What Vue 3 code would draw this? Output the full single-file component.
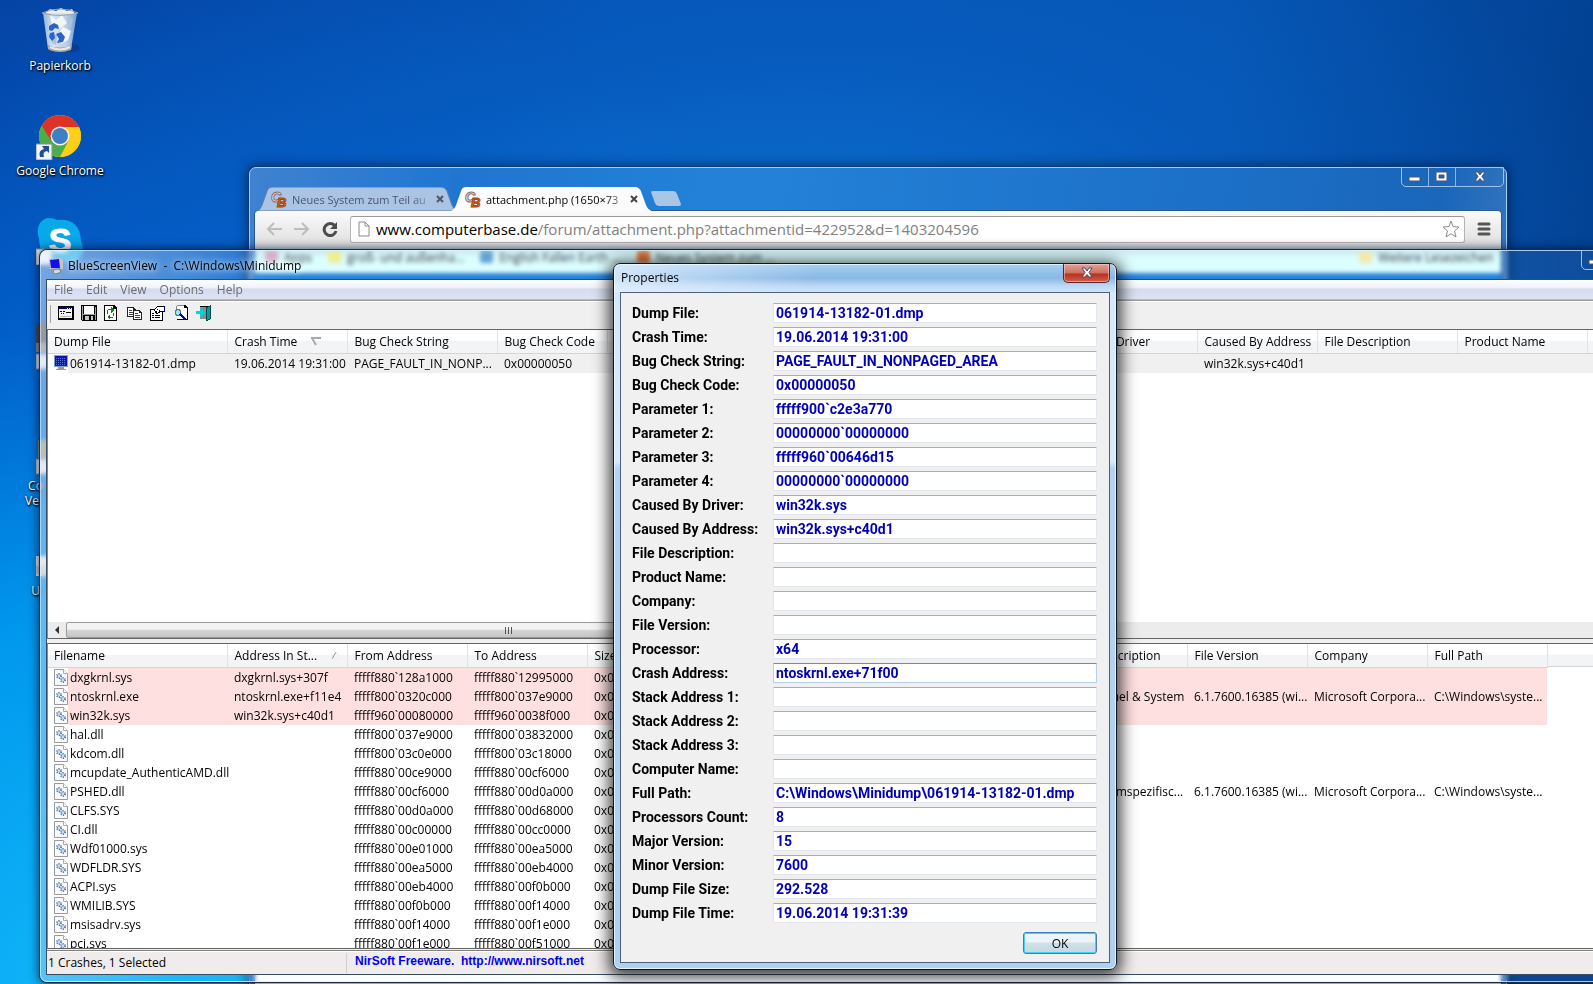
<script setup>
const menus = ['File', 'Edit', 'View', 'Options', 'Help']

const crashColumns = [
  { label: 'Dump File', width: 179 },
  { label: 'Crash Time', width: 120, sort: 'down' },
  { label: 'Bug Check String', width: 150 },
  { label: 'Bug Check Code', width: 110 },
  { label: 'Parameter 1', width: 110 },
  { label: 'Parameter 2', width: 110 },
  { label: 'Parameter 3', width: 110 },
  { label: 'Parameter 4', width: 110 },
  { label: 'Caused By Driver', width: 150 },
  { label: 'Caused By Address', width: 120 },
  { label: 'File Description', width: 140 },
  { label: 'Product Name', width: 130 },
  { label: 'Company', width: 120 },
]
const crash = [
  '061914-13182-01.dmp', '19.06.2014 19:31:00', 'PAGE_FAULT_IN_NONP...', '0x00000050',
  'fffff900`c2e3a770', '00000000`00000000', 'fffff960`00646d15', '00000000`00000000',
  'win32k.sys', 'win32k.sys+c40d1', '', '', '',
]

const moduleColumns = [
  { label: 'Filename', width: 179 },
  { label: 'Address In St...', width: 120, sort: 'up' },
  { label: 'From Address', width: 120 },
  { label: 'To Address', width: 120 },
  { label: 'Size', width: 120 },
  { label: 'Time Stamp', width: 120 },
  { label: 'Time String', width: 120 },
  { label: 'Product Name', width: 120 },
  { label: 'File Description', width: 120 },
  { label: 'File Version', width: 120 },
  { label: 'Company', width: 120 },
  { label: 'Full Path', width: 120 },
]
const version = ['6.1.7600.16385 (wi...', 'Microsoft Corpora...', 'C:\\Windows\\syste...']
const none = ['', '', '', '']
const modules = [
  ['dxgkrnl.sys', 'dxgkrnl.sys+307f', 'fffff880`128a1000', 'fffff880`12995000', none],
  ['ntoskrnl.exe', 'ntoskrnl.exe+f11e4', 'fffff800`0320c000', 'fffff800`037e9000', ['NT Kernel & System', ...version]],
  ['win32k.sys', 'win32k.sys+c40d1', 'fffff960`00080000', 'fffff960`0038f000', none],
  ['hal.dll', '', 'fffff800`037e9000', 'fffff800`03832000', none],
  ['kdcom.dll', '', 'fffff800`03c0e000', 'fffff800`03c18000', none],
  ['mcupdate_AuthenticAMD.dll', '', 'fffff880`00ce9000', 'fffff880`00cf6000', none],
  ['PSHED.dll', '', 'fffff880`00cf6000', 'fffff880`00d0a000', ['Plattformspezifisc...', ...version]],
  ['CLFS.SYS', '', 'fffff880`00d0a000', 'fffff880`00d68000', none],
  ['CI.dll', '', 'fffff880`00c00000', 'fffff880`00cc0000', none],
  ['Wdf01000.sys', '', 'fffff880`00e01000', 'fffff880`00ea5000', none],
  ['WDFLDR.SYS', '', 'fffff880`00ea5000', 'fffff880`00eb4000', none],
  ['ACPI.sys', '', 'fffff880`00eb4000', 'fffff880`00f0b000', none],
  ['WMILIB.SYS', '', 'fffff880`00f0b000', 'fffff880`00f14000', none],
  ['msisadrv.sys', '', 'fffff880`00f14000', 'fffff880`00f1e000', none],
  ['pci.sys', '', 'fffff880`00f1e000', 'fffff880`00f51000', none],
].map(([name, stack, from, to, info]) => {
  const bytes = parseInt(to.slice(9), 16) - parseInt(from.slice(9), 16)
  const size = '0x' + bytes.toString(16).padStart(8, '0')
  return { name, inStack: stack !== '', cells: [stack, from, to, size, '', '', '', ...info] }
})

const properties = [
  ['Dump File:', '061914-13182-01.dmp'],
  ['Crash Time:', '19.06.2014 19:31:00'],
  ['Bug Check String:', 'PAGE_FAULT_IN_NONPAGED_AREA'],
  ['Bug Check Code:', '0x00000050'],
  ['Parameter 1:', 'fffff900`c2e3a770'],
  ['Parameter 2:', '00000000`00000000'],
  ['Parameter 3:', 'fffff960`00646d15'],
  ['Parameter 4:', '00000000`00000000'],
  ['Caused By Driver:', 'win32k.sys'],
  ['Caused By Address:', 'win32k.sys+c40d1'],
  ['File Description:', ''],
  ['Product Name:', ''],
  ['Company:', ''],
  ['File Version:', ''],
  ['Processor:', 'x64'],
  ['Crash Address:', 'ntoskrnl.exe+71f00'],
  ['Stack Address 1:', ''],
  ['Stack Address 2:', ''],
  ['Stack Address 3:', ''],
  ['Computer Name:', ''],
  ['Full Path:', 'C:\\Windows\\Minidump\\061914-13182-01.dmp'],
  ['Processors Count:', '8'],
  ['Major Version:', '15'],
  ['Minor Version:', '7600'],
  ['Dump File Size:', '292.528'],
  ['Dump File Time:', '19.06.2014 19:31:39'],
]
</script>

<template>
  <div class="desktop">
    <ul class="shortcuts">
      <li>
        <svg width="48" height="48" viewBox="0 0 48 48">
          <defs>
            <linearGradient id="bin" x1="0" x2="1"><stop offset="0" stop-color="#8fb3dc" /><stop offset=".3" stop-color="#d9e4f0" /><stop offset=".7" stop-color="#b9cee6" /><stop offset="1" stop-color="#6f9bd0" /></linearGradient>
          </defs>
          <ellipse cx="34" cy="41" rx="10" ry="4" fill="#0a2f7a" opacity=".5" />
          <path d="M7 6 L12 42 Q24 47 35 42 L41 6 Z" fill="url(#bin)" />
          <path d="M9 6 L14 2 20 4 25 1 31 4 36 2 39 7 Z" fill="#e9eef3" />
          <path d="M14 8 l6 5 6-5 5 8-7 6-8-4z M27 20l8 4-3 9-7 4-4-8z" fill="#f2f6fa" />
          <path d="M15 26l6 2-1 10-4-2z M31 10l6 2-2 8-4-3z" fill="#aac3dd" />
          <path d="M6 6 Q24 -2 42 6 Q24 11 6 6z" fill="none" stroke="#a9a29a" stroke-width="1" />
          <path d="M12 38 Q24 43 36 38 L35 43 Q24 47 13 43z" fill="#aaa59c" />
          <path d="M14 40 Q24 45 34 40" stroke="#ece9e2" stroke-width="2" fill="none" />
          <path d="M13 19l5-3 4 2 1 4-4-1-3 3-3-1z M14 26l4-1 1 6-3 3-3-4z M20 27l5-2 4 5-2 5-6 1 2-4z" fill="#2b63c8" />
        </svg>
        <span>Papierkorb</span>
      </li>
      <li>
        <svg width="48" height="48" viewBox="0 0 48 48">
          <circle cx="24" cy="24" r="21" fill="#ffd21a" />
          <path d="M24 24 L5.800 13.500 A21 21 0 0 0 24 45 L33 29z" fill="#4cae4a" />
          <path d="M5.800 13.500 A21 21 0 0 1 42.200 13.500 L44 15 H24 L15 29z" fill="#dd3327" />
          <path d="M24 15 H43 A21 21 0 0 1 24 45 L33 28z" fill="#fdcf16" />
          <circle cx="24" cy="24" r="9.500" fill="#f4f6f8" /><circle cx="24" cy="24" r="8" fill="#3e7fc4" />
          <g><rect x="0" y="32" width="16" height="16" fill="#eef4fb" stroke="#8c8c8c" /><path d="M4 45 Q2 38 8 37 L6 34 H13 V41 L11 39 Q6 40 8 45z" fill="#1d4f91" /></g>
        </svg>
        <span>Google Chrome</span>
      </li>
      <li>
        <svg width="48" height="48" viewBox="0 0 48 48">
          <path d="M13 1 Q18 1 21 3 Q44 1 45 24 Q48 30 46 38 Q40 48 30 45 Q4 47 3 22 Q0 12 4 6 Q8 1 13 1z" fill="#08a8ea" />
          <text x="24" y="35" text-anchor="middle" class="skype-letter">S</text>
          <g><rect x="0" y="32" width="16" height="16" fill="#eef4fb" stroke="#8c8c8c" /></g>
        </svg>
      </li>
      <li>
        <svg width="48" height="48" viewBox="0 0 48 48">
          <path d="M0 4 Q2 1 8 1 H44 V30 H0z" fill="#4b4b4f" /><rect y="21" width="46" height="9" fill="#8a8a8a" />
          <rect x="0" y="32" width="16" height="15" fill="#dce8f6" stroke="#8c8c8c" />
        </svg>
      </li>
      <li>
        <svg width="48" height="48" viewBox="0 0 48 48">
          <rect x="2" y="13" width="42" height="18" fill="#8d9a86" /><rect x="0" y="32" width="16" height="15" fill="#dce8f6" stroke="#8c8c8c" />
        </svg>
        <span class="cut">&nbsp;Co<br />Ve</span>
      </li>
      <li>
        <svg width="48" height="48" viewBox="0 0 48 48">
          <rect x="0" y="24" width="40" height="20" fill="#e8e8e8" /><rect y="34" width="40" height="8" fill="#c9cdd2" />
        </svg>
        <span class="cut">&nbsp; U</span>
      </li>
    </ul>

    <section class="browser" aria-label="Browser">
      <div class="caption">
        <button aria-label="Minimieren"><svg width="14" height="12"><rect x="1" y="6" width="11" height="4" fill="#fff" stroke="#4a5568" /></svg></button>
        <button aria-label="Maximieren"><svg width="14" height="12"><path d="M1 1h11v9H1zM4 4h5v3H4z" fill="#fff" fill-rule="evenodd" stroke="#4a5568" /></svg></button>
        <button class="wide" aria-label="Schließen"><svg width="14" height="12"><path d="M2 1h3l2 3 2-3h3L9 5.500 12 10H9L7 7.500 5 10H2l3-4.500z" fill="#fff" stroke="#4a5568" /></svg></button>
      </div>
      <div class="tabs">
        <div class="tab back">
          <svg class="tab-shape" viewBox="0 0 200 24" preserveAspectRatio="none"><path d="M0 24 Q3 23 5 18 L10 4 Q11 0 15 0 H183 Q187 0 189 4 L194 18 Q196 23 200 24z" fill="#abc4e4" stroke="#5a7fae" /></svg>
          <svg class="fav" width="17" height="17" viewBox="0 0 17 17"><text x="0" y="11" class="fav-c">C</text><text x="6" y="16" class="fav-b">B</text></svg>
          <span class="tab-title">Neues System zum Teil au</span>
          <button class="tab-close" aria-label="Tab schließen"><svg width="8" height="8"><path d="M1 1l6 6M7 1L1 7" stroke="#4c5666" stroke-width="2" /></svg></button>
        </div>
        <div class="tab front">
          <svg class="tab-shape" viewBox="0 0 200 24" preserveAspectRatio="none"><path d="M0 24 Q3 23 5 18 L10 4 Q11 0 15 0 H183 Q187 0 189 4 L194 18 Q196 23 200 24z" fill="#fbfbfb" /></svg>
          <svg class="fav" width="17" height="17" viewBox="0 0 17 17"><text x="0" y="11" class="fav-c">C</text><text x="6" y="16" class="fav-b">B</text></svg>
          <span class="tab-title">attachment.php (1650×73</span>
          <button class="tab-close" aria-label="Tab schließen"><svg width="8" height="8"><path d="M1 1l6 6M7 1L1 7" stroke="#444" stroke-width="2" /></svg></button>
        </div>
        <button class="new-tab" aria-label="Neuer Tab"><svg width="32" height="15"><path d="M1 1 Q1 0 3 0 H23 Q26 0 27 3 L31 13 Q31 15 29 15 H9 Q6 15 5 12z" fill="#a9c6e6" /></svg></button>
      </div>
      <div class="page">
        <div class="nav">
          <button aria-label="Zurück"><svg width="16" height="14"><path d="M16 7H2M8 1L2 7l6 6" stroke="#bdbdbd" stroke-width="2" fill="none" /></svg></button>
          <button aria-label="Vorwärts"><svg width="16" height="14"><path d="M0 7h14M8 1l6 6-6 6" stroke="#bdbdbd" stroke-width="2" fill="none" /></svg></button>
          <button aria-label="Neu laden"><svg width="16" height="16"><path d="M13 5A6 6 0 1 0 14 10" stroke="#4b4b4b" stroke-width="3" fill="none" /><path d="M15 1v7H8z" fill="#4b4b4b" /></svg></button>
          <div class="omnibox">
            <svg width="12" height="16"><path d="M1 1h6l4 4v10H1zM7 1v4h4" fill="#fff" stroke="#8a8a8a" /></svg>
            <span class="url"><b>www.computerbase.de</b>/forum/attachment.php?attachmentid=422952&amp;d=1403204596</span>
            <svg width="18" height="18" viewBox="0 0 18 18"><path d="M9 1l2 5.500 6 .5-4.500 4 1.500 6-5-3.300L4 17l1.500-6L1 7l6-.5z" fill="#fff" stroke="#8a8a8a" stroke-linejoin="round" /></svg>
          </div>
          <button class="burger" aria-label="Menü"><svg width="14" height="14"><path d="M2 2h10M2 7h10M2 12h10" stroke="#555" stroke-width="3" stroke-linecap="round" /></svg></button>
        </div>
        <div class="bookmarks">
          <i class="apps"></i><span>Apps</span>
          <i class="folder"></i><span>groß- und außenha...</span>
          <i class="doc"></i><span>English Fallen Earth ...</span>
          <i class="cb"></i><span>Neues System zum ...</span>
          <i class="folder last"></i><span>Weitere Lesezeichen</span>
        </div>
        <div class="content"></div>
        <div class="page-end"></div>
      </div>
    </section>

    <section class="viewer" aria-label="BlueScreenView">
      <header class="viewer-title">
        <svg width="16" height="16" viewBox="0 0 16 16"><path d="M1 1l11-1 3 2v10l-3-2-10 1z" fill="#c9c4bc" /><path d="M2 2l9-1 1 9-9 0z" fill="#1010ee" /><path d="M5 12l5-1 3 2-2 2-5 1z" fill="#dedad2" stroke="#8a857c" /></svg>
        <h1>BlueScreenView&nbsp; -&nbsp; C:\Windows\Minidump</h1>
        <div class="caption cut-caption"><button aria-label="Minimieren"><svg width="14" height="12"><rect x="1" y="6" width="11" height="4" fill="#fff" stroke="#4a5568" /></svg></button></div>
      </header>
      <div class="client">
        <nav class="menubar"><button v-for="m in menus" :key="m">{{ m }}</button></nav>
        <div class="toolbar">
          <button aria-label="Advanced Options"><svg width="16" height="16" shape-rendering="crispEdges"><path d="M0 1h16v14H0z" fill="#000" /><path d="M1 2h13v11H1z" fill="#f4f4f4" /><path d="M1 2h13v2H1z" fill="#000084" /><path d="M9 3h1v1H9zM11 3h1v1h-1zM13 3h1v1h-1z" fill="#fff" /><path d="M2 6h2v1H2zM5 6h2v1H5zM3 8h1v1H3zM8 7h5v1H8zM5 8h1v1H5z" fill="#000" /><path d="M2 11h11v1H2z" fill="#b5b5b5" /></svg></button>
          <button aria-label="Save"><svg width="16" height="16" shape-rendering="crispEdges"><path d="M0 0h16v16H1L0 15z" fill="#000" /><path d="M1 1h1v14H1zM14 2h1v13h-1zM2 9h12v1H2z" fill="#9c9c9c" /><path d="M3 1h10v8H3z" fill="#fff" /><path d="M4 11h8v4H4z" fill="#c6c6c6" /><path d="M8 11h2v4H8z" fill="#000" /></svg></button>
          <button aria-label="Refresh"><svg width="16" height="16" shape-rendering="crispEdges"><path d="M0 0h10l3 3v13H0z" fill="#000" /><path d="M1 1h8v3h3v11H1z" fill="#fff" /><path d="M3 5h1v4H3zM4 4h3v1H4zM7 2l3 3-3 3zM9 8h1v3H9zM6 12h3v1H6zM6 9l-3 3 3 3z" fill="#008a10" /></svg></button>
          <button aria-label="Copy"><svg width="16" height="16" shape-rendering="crispEdges"><path d="M0 2h6l3 3v7H0z" fill="#222" /><path d="M1 3h5v2h2v6H1z" fill="#fff" /><path d="M2 5h3v1H2zM2 7h5v1H2zM2 9h5v1H2z" fill="#444" /><path d="M6 5h6l3 3v7H6z" fill="#222" /><path d="M7 6h5v2h2v6H7z" fill="#fff" /><path d="M8 8h3v1H8zM8 10h5v1H8zM8 12h5v1H8z" fill="#444" /></svg></button>
          <button aria-label="Properties"><svg width="16" height="16" shape-rendering="crispEdges"><path d="M0 4h13v12H0z" fill="#000" /><path d="M1 5h11v10H1z" fill="#fff" /><path d="M2 8h2v1H2zM2 10h2v1H2zM2 12h2v1H2zM5 10h5v1H5zM5 12h5v1H5z" fill="#000" /><path d="M4 5l4-4h6v5h-3l-4 3z" fill="#fff" stroke="#000" /><path d="M14 1h1v6h-1z" fill="#000084" /><path d="M7 4h1v1H7zM9 5h1v1H9zM6 6h1v1H6z" fill="#000" /></svg></button>
          <button aria-label="Find"><svg width="16" height="16" shape-rendering="crispEdges"><path d="M4 0h8l3 3v12H4z" fill="#000" /><path d="M4 0h7v3h3v11H4z" fill="#fff" /><path d="M4 0h7v1H4zM3 1h1v3H3z" fill="#888" /><path d="M3 4h3v1h1v4H6v1H3V9H2V5h1z" fill="#8aefef" stroke="#5a7a8a" /><path d="M7 9l6 6" stroke="#0000c8" stroke-width="2" /></svg></button>
          <button aria-label="Exit"><svg width="16" height="16" shape-rendering="crispEdges"><path d="M4 1h11v1H4z" fill="#000" /><path d="M4 2h8v12H4z" fill="#8c8c8c" /><path d="M10 3l4-2v13l-4 2z" fill="#009c9c" stroke="#004a4a" /><path d="M0 6h4V3l5 4.500L4 12V9H0z" fill="#00d6de" /></svg></button>
        </div>

        <div class="pane crashes">
          <table>
            <colgroup><col v-for="c in crashColumns" :key="c.label" :style="{ width: c.width + 'px' }" /></colgroup>
            <thead>
              <tr>
                <th v-for="c in crashColumns" :key="c.label">{{ c.label }}<svg v-if="c.sort" class="sort" width="11" height="9"><path d="M0 1h10M1 1l4 7" fill="none" stroke="#aaa" stroke-width="2" /></svg></th>
              </tr>
            </thead>
            <tbody>
              <tr class="selected">
                <td v-for="(v, i) in crash" :key="i">
                  <svg v-if="i === 0" class="file-icon" width="14" height="16" shape-rendering="crispEdges"><rect width="14" height="12" fill="#7fa6c8" /><rect x="1" y="1" width="12" height="10" fill="#1414a8" /><path d="M2 3h10M2 5h10M2 7h10M2 9h10" stroke="#5a70d8" stroke-dasharray="1 1" /><path d="M4 12h6v2h2v1H2v-1h2z" fill="#8f9aa5" /></svg>{{ v }}
                </td>
              </tr>
            </tbody>
          </table>
          <div class="scrollbar">
            <span class="arrow"></span>
            <div class="thumb"><i></i><i></i><i></i></div>
            <div class="track"></div>
          </div>
        </div>

        <div class="pane modules">
          <table>
            <colgroup><col v-for="c in moduleColumns" :key="c.label" :style="{ width: c.width + 'px' }" /></colgroup>
            <thead>
              <tr>
                <th v-for="c in moduleColumns" :key="c.label">{{ c.label }}<svg v-if="c.sort" class="sort" width="10" height="9"><path d="M1 8l4-7" fill="none" stroke="#8c8c8c" stroke-width="1" /><path d="M5 1l4 7H1" fill="none" stroke="#eee" /></svg></th>
              </tr>
            </thead>
            <tbody>
              <tr v-for="m in modules" :key="m.name" :class="{ stack: m.inStack }">
                <td><svg class="file-icon" width="14" height="17"><path d="M.5.5h9l4 4v12H.5z" fill="#fbfbfb" stroke="#9a9a9a" /><path d="M9.500.5v4h4" fill="#fff" stroke="#aaa" /><circle cx="5" cy="7" r="2" fill="#d5e6f7" stroke="#4a7ab5" stroke-dasharray="1 1" stroke-width="2" /><circle cx="9" cy="11" r="2" fill="#d5e6f7" stroke="#4a7ab5" stroke-dasharray="1 1" stroke-width="2" /></svg>{{ m.name }}</td>
                <td v-for="(v, i) in m.cells" :key="i">{{ v }}</td>
              </tr>
            </tbody>
          </table>
        </div>

        <footer class="status">
          <span class="count">1 Crashes, 1 Selected</span>
          <a href="http://www.nirsoft.net">NirSoft Freeware.&nbsp; http://www.nirsoft.net</a>
        </footer>
      </div>
    </section>

    <form class="dialog" role="dialog" aria-labelledby="dialog-title" @submit.prevent>
      <header class="dialog-title">
        <h2 id="dialog-title">Properties</h2>
        <button type="button" class="close" aria-label="Close"><svg width="14" height="12"><path d="M2 1h3l2 3 2-3h3L9 5.500 12 10H9L7 7.500 5 10H2l3-4.500z" fill="#fff" stroke="#59485a" /></svg></button>
      </header>
      <div class="dialog-body">
        <div v-for="([label, value], i) in properties" :key="label" class="field">
          <label :for="'prop-' + i">{{ label }}</label>
          <input :id="'prop-' + i" :class="{ hot: i === 15 }" type="text" readonly :value="value" />
        </div>
        <div class="actions"><button class="ok">OK</button></div>
      </div>
    </form>
  </div>
</template>

<style>
body { margin: 0; overflow: hidden; }
</style>

<style scoped>
* { box-sizing: border-box; }
button { padding: 0; border: 0; background: none; font: inherit; color: inherit; }
h1, h2 { margin: 0; font-weight: 400; font-size: 12px; }
svg { display: block; flex: none; }

.desktop {
  position: relative;
  height: 100vh;
  overflow: hidden;
  font-family: "Open Sans", "Noto Sans", sans-serif;
  font-size: 12px;
  color: #000;
  background:
    radial-gradient(ellipse 860px 460px at 50% 28%, rgba(18, 130, 225, .65), rgba(12, 110, 210, .35) 50%, transparent),
    radial-gradient(ellipse 1000px 1100px at 8% 105%, #14bcfa 0, #0098ee 38%, rgba(0, 100, 210, .8) 65%, transparent 100%),
    linear-gradient(100deg, #053f9e 0, #0350b2 35%, #0552b0 70%, #013b88 100%);
}

.shortcuts { list-style: none; margin: 0; padding: 7px 0 0; width: 120px; }
.shortcuts li { height: 105px; display: flex; flex-direction: column; align-items: center; gap: 3px; }
.shortcuts span { line-height: 15px; color: #fff; white-space: nowrap; text-shadow: 0 1px 2px #000, 1px 1px 2px #000; }
.shortcuts .cut { width: 70px; }
.skype-letter { font: 700 34px "Liberation Sans", sans-serif; fill: #fff; stroke: #fff; stroke-width: 1px; }

.browser {
  position: absolute; top: 167px; left: 249px; right: 86px; bottom: -40px;
  display: flex; flex-direction: column;
  padding: 0 5px;
  border: 1px solid #a9cdf0; border-radius: 7px 7px 0 0;
  background: linear-gradient(100deg, #3f82d0 0, #1f76d2 15%, #2382d8 35%, #1c6fc6 70%, #1966bb 85%, #4880c0 95%, #3a78bc 100%);
  box-shadow: 0 0 0 1px #0d3a78, 0 0 12px 2px rgba(0, 20, 60, .6);
}
.caption { position: absolute; top: -1px; right: 2px; height: 20px; display: flex; border: 1px solid #9fc3e8; border-radius: 0 0 5px 5px; }
.caption button { width: 27px; display: grid; place-items: center; border-right: 1px solid #8fb5df; }
.caption .wide { width: 47px; border: 0; }
.tabs { display: flex; align-items: flex-end; height: 43px; padding: 0 0 0 2px; }
.tab { position: relative; width: 201px; height: 24px; margin-right: -7px; display: flex; align-items: center; padding: 0 14px; }
.front { z-index: 1; }
.tab-shape { position: absolute; inset: 0; width: 100%; height: 100%; }
.fav, .tab-title, .tab-close { position: relative; }
.fav-c { font: italic 700 14px "Liberation Sans", sans-serif; fill: #f4f4f4; stroke: #8a6a6a; stroke-width: 1px; }
.fav-b { font: italic 700 13px "Liberation Sans", sans-serif; fill: #f07010; stroke: #a04010; stroke-width: 1px; }
.tab-title { flex: 1; min-width: 0; margin-left: 4px; font-size: 11px; white-space: nowrap; -webkit-mask-image: linear-gradient(to right, #000 85%, rgba(0, 0, 0, .3)); mask-image: linear-gradient(to right, #000 85%, rgba(0, 0, 0, .3)); }
.tab-close { margin-left: 5px; }
.back .tab-title { color: #46566e; }
.new-tab { margin: 0 0 5px 5px; }
.page { flex: 1; display: flex; flex-direction: column; border-radius: 4px 4px 0 0; background: #f1f1f1; box-shadow: 0 0 0 1px #2a5a94; }
.nav { display: flex; align-items: center; height: 37px; padding: 0 10px 1px 11px; gap: 12px; border-radius: 4px 4px 0 0; background: linear-gradient(#fafafa, #dedede); }
.omnibox { flex: 1; display: flex; align-items: center; gap: 6px; height: 27px; padding: 0 4px 0 7px; background: #fff; border: 1px solid #b4b4b4; border-top-color: #999; border-radius: 3px; }
.url { flex: 1; font-size: 15px; color: #808080; white-space: nowrap; }
.url b { font-weight: 400; color: #000; }
.bookmarks { display: flex; align-items: center; height: 25px; padding: 0 8px 7px 10px; gap: 6px; background: linear-gradient(#c4e4e4, #dcffff 40%); color: #334; }
.bookmarks i { width: 13px; height: 12px; border-radius: 2px; }
.bookmarks span { margin-right: 10px; white-space: nowrap; }
.bookmarks span:last-child { margin: 0; }
.apps { background: #d9a5c0; }
.folder { background: #f1ee8a; }
.doc { background: #5c9fd4; }
.cb { background: #e07030; }
.last { margin-left: auto; background: #f6e9a6; }
.content { flex: 1; background: linear-gradient(#1a7ad8, #3da0f0 40%, #fdfdfd); }
.page-end { height: 60px; background: linear-gradient(#fff 20px, #bbb); }

.viewer {
  position: absolute; top: 250px; left: 40px; right: -60px; bottom: 2px;
  display: flex; flex-direction: column;
  padding: 0 6px 7px;
  border: 1px solid rgba(225, 240, 255, .75); border-radius: 7px 0 0 7px;
  background: linear-gradient(100deg, rgba(235, 240, 250, .5) 0, rgba(200, 225, 250, .3) 160px, rgba(220, 240, 255, .06) 260px);
  -webkit-backdrop-filter: blur(2px); backdrop-filter: blur(2px);
  box-shadow: 0 0 0 1px #1b2c44, 0 0 10px 2px rgba(0, 10, 40, .65);
}
.viewer-title { display: flex; align-items: center; gap: 4px; height: 29px; padding-left: 1px; }
.viewer-title h1 { text-shadow: 0 0 6px rgba(255, 255, 255, .8), 0 0 10px rgba(255, 255, 255, .7); white-space: pre; }
.cut-caption { right: 42px; }
.client { flex: 1; min-height: 0; display: flex; flex-direction: column; background: #f0f0f0; box-shadow: 0 0 0 1px #3c4c60; }
.menubar { display: flex; height: 20px; flex: none; padding-left: 7px; gap: 13px; background: linear-gradient(#fff, #eef1f9 8px, #d5dbee 9px, #dfe4f4); border-bottom: 1px solid #b4b8c4; color: #6d6d6d; }
.toolbar { display: flex; align-items: center; height: 29px; flex: none; padding: 0 0 4px 10px; gap: 7px; border-top: 1px solid #a0a0a0; border-left: 1px solid #f0f0f0; box-shadow: inset 0 1px #fff; background: linear-gradient(#a5a5a5, #a5a5a5) 2px 4px / 1px 18px no-repeat #f0f0f0; }
.pane { overflow: hidden; border-top: 1px solid #646464; border-left: 1px solid #828790; background: #fff; }
.crashes { height: 310px; flex: none; display: flex; flex-direction: column; border-bottom: 1px solid #646464; }
.modules { flex: 1; min-height: 0; margin-top: 4px; border-bottom: 1px solid #646464; background: linear-gradient(#fff 10px, #f3f4f6 11px, #f3f4f6 22px, #d5d5d5 22px, #d5d5d5 23px, #fff 23px); }
table { table-layout: fixed; border-collapse: collapse; width: 0; font-size: 12px; }
th { height: 23px; padding: 0 0 0 7px; text-align: left; font-weight: 400; white-space: nowrap; border-right: 1px solid #dfe1e5; border-bottom: 1px solid #d5d5d5; background: linear-gradient(#fff 45%, #f3f4f6 50%); }
.sort { display: inline-block; margin-left: 14px; }
td { height: 19px; padding: 0 0 0 7px; line-height: 19px; white-space: nowrap; }
th:first-child, td:first-child { padding-left: 6px; }
.crashes tbody td { height: 20px; }
.file-icon { float: left; margin: 1px 2px 0 0; }
.selected td { background: #f0f0f0; }
.stack td { background: #ffe0e0; }
.selected td:first-child { background: linear-gradient(to right, #fff 20px, #f0f0f0 20px); }
.stack td:first-child { background: linear-gradient(to right, #fff 20px, #ffe0e0 20px); }
.scrollbar { display: flex; height: 16px; margin-top: auto; background: #ececec; }
.arrow { width: 18px; display: grid; place-items: center; }
.arrow::before { content: ""; border: 4px solid transparent; border-left: 0; border-right-color: #333; }
.thumb { width: 884px; display: flex; align-items: center; justify-content: center; gap: 2px; border: 1px solid #9a9a9a; border-radius: 2px; background: linear-gradient(#f3f3f3 45%, #d6d6d6 50%, #c4c4c4); }
.thumb i { width: 1px; height: 7px; background: #555; }
.track { flex: 1; }
.status { display: flex; height: 24px; flex: none; align-items: center; padding-left: 1px; border-top: 1px solid #828282; box-shadow: inset 0 1px #fff; background: #f0eceb; margin-top: 1px; }
.count { width: 299px; line-height: 20px; border-right: 1px solid #cfcfcf; }
.status a { align-self: flex-start; padding-left: 8px; font: 700 12px/20px "Liberation Sans", sans-serif; color: #0000f0; text-decoration: none; }

.dialog {
  position: absolute; top: 263px; left: 613px; width: 504px;
  padding: 0 6px 6px;
  border: 1px solid #10161f; border-radius: 7px;
  background:
    linear-gradient(100deg, rgba(230, 242, 255, .75), rgba(255, 255, 255, 0) 200px) 0 0 / 100% 28px no-repeat,
    linear-gradient(#a5d0f5, #8ab8e2 14px, #bcd8f4 22px, #cfe3f8 28px) 0 0 / 100% 28px no-repeat,
    linear-gradient(#d3e8fb, #d8ebfc 28%, #b3d3f6 29%, #b0d0f0);
  box-shadow: inset 0 0 0 1px rgba(240, 250, 255, .8), 0 3px 16px 4px rgba(0, 0, 0, .75);
}
.dialog-title { display: flex; justify-content: space-between; height: 28px; padding-left: 1px; }
.dialog-title h2 { line-height: 27px; }
.close { width: 47px; height: 19px; display: grid; place-items: center; border: 1px solid #5a2230; border-top: 0; border-radius: 0 0 5px 5px; background: linear-gradient(#e2a29b, #cf6f63 9px, #b8301e 10px, #d0604c); box-shadow: inset 0 0 0 1px rgba(255, 220, 210, .5); }
.dialog-body { padding: 8px 12px 8px 11px; border: 1px solid #4d6078; background: #f0f0f0; font: 700 14px Roboto, sans-serif; }
.field { display: flex; align-items: center; height: 24px; }
.field label { width: 141px; white-space: nowrap; }
.field input { flex: 1; min-width: 0; height: 20px; margin: 0; padding: 0 2px; border: 1px solid #e2e8f0; border-top-color: #abadb3; border-radius: 1px; outline: 0; background: #fff; color: #0000b8; font: inherit; }
.field .hot { border-color: #b5cfe7; border-top-color: #5794bf; }
.actions { display: flex; justify-content: flex-end; padding-top: 7px; }
.ok { width: 74px; height: 22px; border: 1px solid #3c7fb1; border-radius: 3px; box-shadow: inset 0 0 0 1px #48d0f5; background: linear-gradient(#edf4f7 45%, #cfe0e8 50%, #c3d9e4); font: 400 12px "Open Sans", sans-serif; }
</style>
